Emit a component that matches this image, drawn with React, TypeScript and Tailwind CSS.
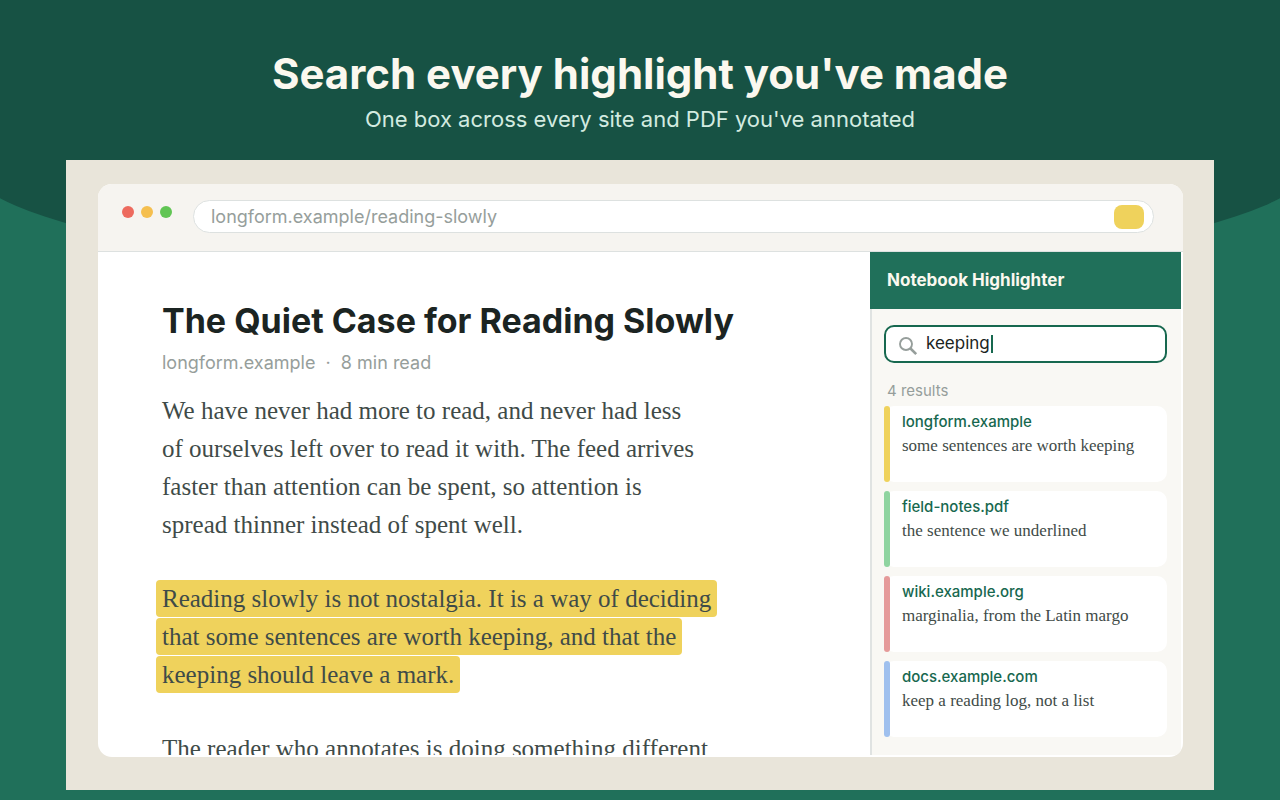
import React from 'react';

const results = [
  { site: 'longform.example', quote: 'some sentences are worth keeping', bar: 'bg-[#efd25c]' },
  { site: 'field-notes.pdf', quote: 'the sentence we underlined', bar: 'bg-[#8fd4a0]' },
  { site: 'wiki.example.org', quote: 'marginalia, from the Latin margo', bar: 'bg-[#e59a9a]' },
  { site: 'docs.example.com', quote: 'keep a reading log, not a list', bar: 'bg-[#9fc0ee]' },
];

const intro = [
  'We have never had more to read, and never had less',
  'of ourselves left over to read it with. The feed arrives',
  'faster than attention can be spent, so attention is',
  'spread thinner instead of spent well.',
];

const marked = [
  'Reading slowly is not nostalgia. It is a way of deciding',
  'that some sentences are worth keeping, and that the',
  'keeping should leave a mark.',
];

function BrowserBar() {
  return (
    <header className="flex h-[68px] shrink-0 border-b border-[#dde1e0] bg-[#f6f4f0] pt-4 pr-[29px] pl-6">
      <div className="mt-[6px] flex h-3 gap-[7px]">
        <span className="h-3 w-3 rounded-full bg-[#ed6a5e]" />
        <span className="h-3 w-3 rounded-full bg-[#f5bf4f]" />
        <span className="h-3 w-3 rounded-full bg-[#61c554]" />
      </div>
      <div className="ml-[21px] flex h-[33px] flex-1 items-center rounded-full border border-[#dde1e0] bg-white pr-[9px] pl-[17px]">
        <input
          aria-label="Address"
          defaultValue="longform.example/reading-slowly"
          className="min-w-0 flex-1 bg-transparent text-lg text-[#969e9b] outline-none"
        />
        <button aria-label="Open highlighter" className="h-6 w-[30px] rounded-lg bg-[#efd25c]" />
      </div>
    </header>
  );
}

function Article() {
  return (
    <article className="mb-[2px] min-w-0 flex-1 overflow-hidden pt-[46px] pl-16 whitespace-nowrap">
      <h2 className="text-[34px] leading-[46px] font-bold text-[#1b2422]">The Quiet Case for Reading Slowly</h2>
      <p className="mt-[7px] text-lg leading-6 text-[#969e9b]">longform.example &nbsp;·&nbsp; 8 min read</p>
      <div className="mt-[17px] font-['Liberation_Serif',serif] text-[25px] leading-[38px] text-[#3f4b48]">
        <p>
          {intro.map((line) => (
            <span key={line} className="block">{line}</span>
          ))}
        </p>
        {/* highlighted passage, one bar per line */}
        <p className="mt-9 -ml-[6px] flex flex-col items-start gap-px">
          {marked.map((line) => (
            <mark key={line} className="rounded bg-[#efd25c] px-[6px] leading-[37px] text-inherit">{line}</mark>
          ))}
        </p>
        <p className="mt-[37px]">The reader who annotates is doing something different</p>
      </div>
    </article>
  );
}

function Sidebar() {
  return (
    <aside className="mr-[2px] mb-[2px] flex w-[311px] shrink-0 flex-col border-l-2 border-[#e0e3e2] bg-[#f9f8f4]">
      <h2 className="-ml-[2px] flex h-[57px] items-center bg-[#20705a] pl-[17px] text-[17px] font-bold text-[#fbf8ef]">
        Notebook Highlighter
      </h2>
      <div className="pt-4 pr-[14px] pl-3">
        <label className="flex h-[38px] items-center rounded-[10px] border-2 border-[#17684f] bg-white pl-3">
          <svg viewBox="0 0 20 20" className="mt-1 h-5 w-5 text-[#969e9b]" fill="none" stroke="currentColor">
            <circle cx="8" cy="8" r="6" strokeWidth="1.9" />
            <path d="M12 12 18.2 18.2" strokeWidth="2.6" />
          </svg>
          <input
            aria-label="Search highlights"
            defaultValue="keeping"
            className="ml-2 w-[65px] bg-transparent text-[17px] text-[#1b2422] outline-none"
          />
          <span className="h-[18px] w-[2px] bg-[#17684f]" />
        </label>
        <p className="mt-[18px] pl-[3px] text-[15px] leading-5 text-[#969e9b]">4 results</p>
        <ul className="mt-[5px] flex flex-col gap-[9px]">
          {results.map((r) => (
            <li key={r.site} className="flex h-[76px] rounded-[10px] bg-white">
              <span className={`w-[6px] rounded-full ${r.bar}`} />
              <div className="pt-[5px] pl-3">
                <a href="#" className="block text-[15px] leading-[22px] font-medium text-[#17684f]">{r.site}</a>
                <p className="mt-[2px] font-['Liberation_Serif',serif] text-[17px] leading-[22px] whitespace-nowrap text-[#3f4b48]">{r.quote}</p>
              </div>
            </li>
          ))}
        </ul>
      </div>
    </aside>
  );
}

export default function App() {
  return (
    <div className="relative flex min-h-screen flex-col overflow-hidden bg-[#20705a] font-['Inter',sans-serif]">
      {/* dark dome behind the heading */}
      <div className="absolute top-0 left-1/2 h-[280px] w-[1350px] -translate-x-1/2 rounded-[0_0_50%_50%/0_0_120px_120px] bg-[#175244]" />

      <div className="relative pt-[46px] text-center">
        <h1 className="text-[42px] leading-[56px] font-bold text-[#fbf8ef]">Search every highlight you've made</h1>
        <p className="mt-[3px] text-[22px] leading-[28px] text-[#d3ebe0]">One box across every site and PDF you've annotated</p>
      </div>

      <main className="relative mx-[66px] mt-[27px] mb-[10px] flex flex-1 flex-col bg-[#e9e5da] pt-6 pr-[31px] pb-[33px] pl-8">
        <div className="flex h-[573px] flex-col overflow-hidden rounded-[14px] bg-white">
          <BrowserBar />
          <div className="flex min-h-0 flex-1">
            <Article />
            <Sidebar />
          </div>
        </div>
      </main>
    </div>
  );
}
